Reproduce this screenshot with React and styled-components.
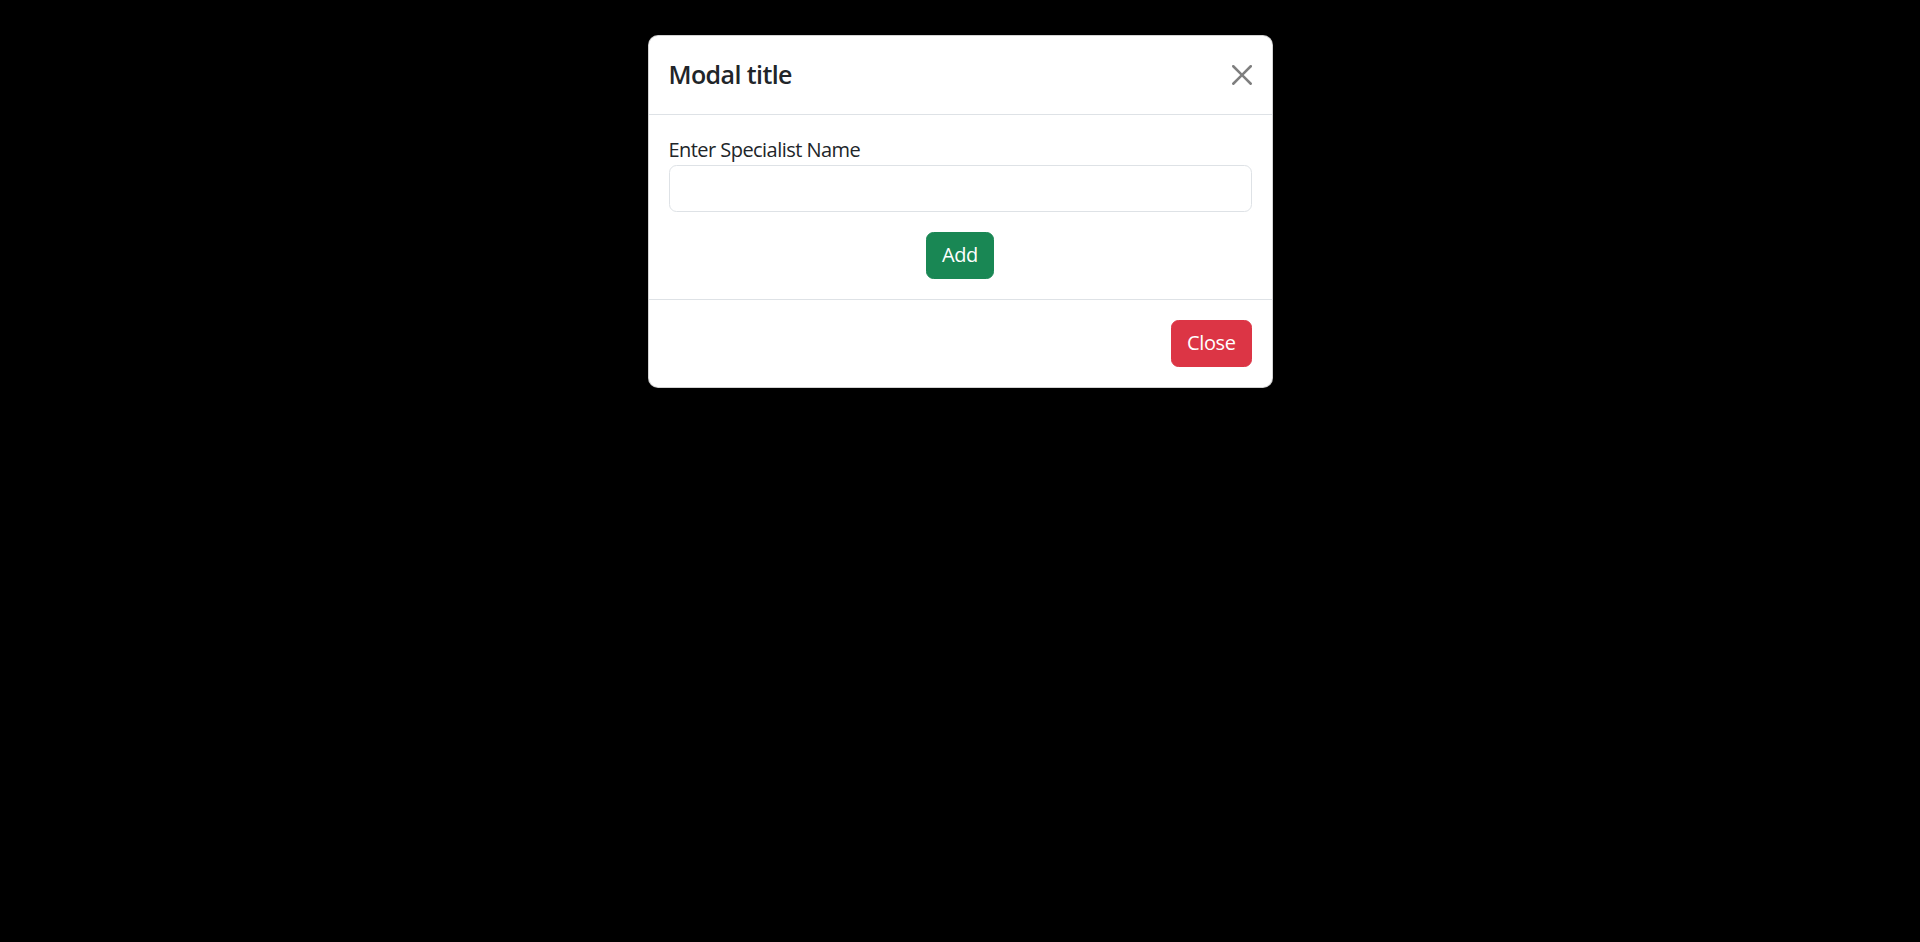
import React from "react";
import styled, { createGlobalStyle } from "styled-components";

const Global = createGlobalStyle`
  html, body {
    margin: 0;
    padding: 0;
    background: #000;
  }
  body {
    font-family: "Open Sans", "Noto Sans", sans-serif;
    color: #212529;
    font-size: 20px;
    line-height: 1.5;
  }
  *, *::before, *::after { box-sizing: border-box; }
`;

const Page = styled.div`
  min-height: 942px;
  background: #000;
  padding-top: 35px;
`;

const Dialog = styled.div`
  width: 625px;
  margin: 0 auto;
  background: #fff;
  border: 1px solid rgba(0, 0, 0, 0.175);
  border-radius: 10px;
  display: flex;
  flex-direction: column;
`;

const Header = styled.div`
  display: flex;
  align-items: center;
  justify-content: space-between;
  padding: 20px;
  border-bottom: 1px solid #dee2e6;
`;

const Title = styled.h5`
  margin: 0;
  font-size: 25px;
  font-weight: 600;
  letter-spacing: -0.6px;
  line-height: 1.5;
`;

const CloseX = styled.button`
  width: 20px;
  height: 20px;
  padding: 0;
  border: 0;
  background: transparent;
  opacity: 0.5;
  cursor: pointer;
  display: flex;
  svg { display: block; }
`;

const Body = styled.div`
  padding: 20px;
`;

const Label = styled.label`
  display: block;
  font-size: 20px;
  line-height: 30px;
  letter-spacing: -0.55px;
`;

const Input = styled.input`
  display: block;
  width: 100%;
  height: 47px;
  padding: 7.5px 15px;
  font: inherit;
  color: #212529;
  border: 1px solid #dee2e6;
  border-radius: 7.5px;
  background: #fff;
  outline: none;
`;

const Center = styled.div`
  display: flex;
  justify-content: center;
  margin-top: 20px;
`;

const Button = styled.button`
  font: inherit;
  font-size: 20px;
  line-height: 30px;
  letter-spacing: -0.4px;
  padding: 7.5px 15px;
  border: 1px solid ${(p) => p.$bg};
  border-radius: 7.5px;
  background: ${(p) => p.$bg};
  color: #fff;
  cursor: pointer;
  margin: ${(p) => p.$margin || "0"};
`;

const Footer = styled.div`
  display: flex;
  justify-content: flex-end;
  padding: 15px;
  border-top: 1px solid #dee2e6;
`;

export default function App() {
  return (
    <>
      <Global />
      <Page>
        <Dialog>
          <Header>
            <Title>Modal title</Title>
            <CloseX aria-label="Close">
              <svg width="20" height="20" viewBox="0 0 16 16">
                <path
                  fill="#000"
                  d="M.293.293a1 1 0 0 1 1.414 0L8 6.586 14.293.293a1 1 0 1 1 1.414 1.414L9.414 8l6.293 6.293a1 1 0 0 1-1.414 1.414L8 9.414l-6.293 6.293a1 1 0 0 1-1.414-1.414L6.586 8 .293 1.707a1 1 0 0 1 0-1.414z"
                />
              </svg>
            </CloseX>
          </Header>
          <Body>
            <Label htmlFor="spec">Enter Specialist Name</Label>
            <Input id="spec" type="text" />
            <Center>
              <Button $bg="#198754">Add</Button>
            </Center>
          </Body>
          <Footer>
            <Button $bg="#dc3545" $margin="5px">Close</Button>
          </Footer>
        </Dialog>
      </Page>
    </>
  );
}
